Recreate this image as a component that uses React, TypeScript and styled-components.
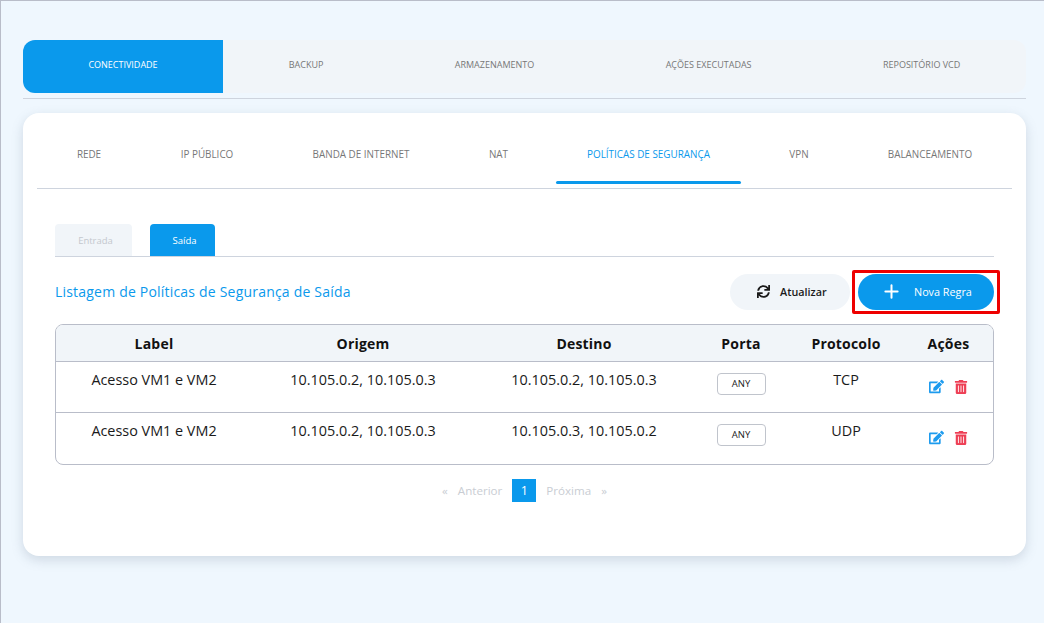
import React from "react";
import styled, { createGlobalStyle } from "styled-components";
import { FaEdit, FaSync, FaTrashAlt } from "react-icons/fa";
import { Plus } from "lucide-react";

const blue = "#0a99ec";
const soft = "#f1f5f9";
const line = "#ced4de";

const GlobalStyle = createGlobalStyle`
  html, body { margin: 0; padding: 0; height: 100%; }
  body {
    font-family: "Open Sans", "Liberation Sans", sans-serif;
    background: #eff7fe;
    overflow: hidden;
  }
`;

const Page = styled.div`
  box-sizing: border-box;
  height: 623px;
  padding: 39px 18px 0 22px;
  border-top: 1px solid #b9bdc9;
  border-left: 1px solid #b9bdc9;
`;

const MainTabs = styled.nav`
  display: flex;
  height: 53px;
  background: ${soft};
  border-radius: 12px;
`;

const MainTab = styled.div<{ $active?: boolean }>`
  flex: ${(p) => (p.$active ? "0 0 200px" : "1 1 auto")};
  box-sizing: border-box;
  display: flex;
  align-items: center;
  justify-content: center;
  padding: 0 ${(p) => (p.$active ? 0 : 65)}px 4px;
  font-size: 9px;
  white-space: nowrap;
  color: ${(p) => (p.$active ? "#fff" : "#777")};
  background: ${(p) => (p.$active ? blue : "transparent")};
  border-radius: ${(p) => (p.$active ? "12px 0 0 12px" : "0")};
`;

const MainRule = styled.div`
  height: 1px;
  margin-top: 5px;
  background: ${line};
`;

const Card = styled.section`
  box-sizing: border-box;
  height: 443px;
  margin-top: 14px;
  padding: 0 14px;
  background: #fff;
  border-radius: 16px;
  box-shadow: 0 4px 12px rgba(90, 110, 130, 0.22);
`;

const SubTabs = styled.nav`
  display: flex;
  height: 75px;
  border-bottom: 1px solid ${line};
`;

const SubTab = styled.div<{ $width: number; $inset?: number; $active?: boolean }>`
  position: relative;
  flex: 0 0 ${(p) => p.$width}px;
  box-sizing: border-box;
  display: flex;
  align-items: center;
  justify-content: center;
  padding-top: 6px;
  padding-right: ${(p) => p.$inset ?? 0}px;
  font-size: 9.9px;
  white-space: nowrap;
  color: ${(p) => (p.$active ? blue : "#777")};
  ${(p) =>
    p.$active &&
    `&::after {
      content: "";
      position: absolute;
      left: 0;
      right: 0;
      bottom: 4px;
      height: 3px;
      border-radius: 2px;
      background: ${blue};
    }`}
`;

const Body = styled.div`
  padding: 35px 18px 0;
`;

const Toggle = styled.div`
  display: flex;
  gap: 18px;
  height: 32px;
  border-bottom: 1px solid ${line};
`;

const ToggleTab = styled.div<{ $width: number; $active?: boolean }>`
  box-sizing: border-box;
  display: flex;
  align-items: center;
  justify-content: center;
  width: ${(p) => p.$width}px;
  padding-left: 4px;
  font-size: 9.5px;
  font-weight: 500;
  color: ${(p) => (p.$active ? "#fff" : "#c4c8ce")};
  background: ${(p) => (p.$active ? blue : soft)};
  border-radius: 4px 4px 0 0;
`;

const Header = styled.div`
  display: flex;
  align-items: center;
  justify-content: space-between;
  margin-top: 17px;
  height: 36px;
`;

const Title = styled.h2`
  margin: 0;
  padding-bottom: 2px;
  font-size: 14px;
  font-weight: 400;
  letter-spacing: 0.2px;
  color: ${blue};
`;

const Actions = styled.div`
  display: flex;
  gap: 8px;
`;

const Pill = styled.button<{ $primary?: boolean }>`
  display: flex;
  align-items: center;
  height: 36px;
  border: 0;
  border-radius: 18px;
  padding: 0 0 2px;
  font-family: inherit;
  font-size: 10.8px;
  font-weight: ${(p) => (p.$primary ? 400 : 600)};
  color: ${(p) => (p.$primary ? "#fff" : "#1a1a1a")};
  background: ${(p) => (p.$primary ? blue : soft)};
  width: ${(p) => (p.$primary ? 136 : 120)}px;
  padding-left: ${(p) => (p.$primary ? 23 : 27)}px;
  gap: ${(p) => (p.$primary ? 12 : 10)}px;
`;

const Highlight = styled.div`
  position: relative;
  &::after {
    content: "";
    position: absolute;
    inset: -4px -6px;
    border: 3px solid #ee0000;
    border-radius: 2px;
    pointer-events: none;
  }
`;

const TableBox = styled.div`
  margin-top: 14px;
  border: 1px solid #b9bdc9;
  border-radius: 8px;
  overflow: hidden;
`;

const Table = styled.table`
  width: 100%;
  table-layout: fixed;
  border-collapse: separate;
  border-spacing: 0;

  tbody tr + tr td {
    border-top: 1px solid #b9bdc9;
  }
`;

const Th = styled.th`
  height: 36px;
  padding: 0;
  font-size: 14px;
  font-weight: 700;
  letter-spacing: 0.2px;
  color: #111;
  background: ${soft};
  border-bottom: 1px solid #b9bdc9;
`;

const Tr = styled.tr<{ $height: number }>`
  height: ${(p) => p.$height}px;
`;

const Td = styled.td`
  padding: 8px 0 0;
  vertical-align: top;
  text-align: center;
  font-size: 14.4px;
  line-height: 20px;
  color: #1a1a1a;
`;

const Badge = styled.span`
  display: inline-flex;
  align-items: center;
  justify-content: center;
  box-sizing: border-box;
  width: 49px;
  height: 22px;
  margin-top: 3px;
  border: 1px solid #c0c4cc;
  border-radius: 4px;
  font-size: 9.5px;
  color: #222;
`;

const IconRow = styled.div`
  display: flex;
  justify-content: center;
  align-items: center;
  gap: 10px;
  margin-top: 9px;
  font-size: 14px;
`;

const EditIcon = styled(FaEdit)`
  font-size: 15px;
  color: #1d9bee;
`;

const TrashIcon = styled(FaTrashAlt)`
  font-size: 14px;
  color: #ee3f55;
`;

const Pager = styled.div`
  display: flex;
  justify-content: center;
  align-items: center;
  gap: 10px;
  margin-top: 14px;
  height: 23px;
  font-size: 11.6px;
  color: #c9cdd3;
`;

const PagerCurrent = styled.span`
  display: flex;
  align-items: center;
  justify-content: center;
  width: 24px;
  height: 23px;
  font-size: 12.5px;
  color: #fff;
  background: ${blue};
`;

const mainTabs = ["CONECTIVIDADE", "BACKUP", "ARMAZENAMENTO", "AÇÕES EXECUTADAS", "REPOSITÓRIO VCD"];

const subTabs = [
  { label: "REDE", width: 104 },
  { label: "IP PÚBLICO", width: 132 },
  { label: "BANDA DE INTERNET", width: 176 },
  { label: "NAT", width: 107, inset: 8 },
  { label: "POLÍTICAS DE SEGURANÇA", width: 185, active: true },
  { label: "VPN", width: 116 },
  { label: "BALANCEAMENTO", width: 155, inset: 9 },
];

const columns = [
  { label: "Label", width: 196 },
  { label: "Origem", width: 222 },
  { label: "Destino", width: 220 },
  { label: "Porta", width: 94 },
  { label: "Protocolo", width: 116 },
  { label: "Ações", width: 89 },
];

const rules = [
  { label: "Acesso VM1 e VM2", origin: "10.105.0.2, 10.105.0.3", target: "10.105.0.2, 10.105.0.3", protocol: "TCP", height: 50 },
  { label: "Acesso VM1 e VM2", origin: "10.105.0.2, 10.105.0.3", target: "10.105.0.3, 10.105.0.2", protocol: "UDP", height: 52 },
];

export default function App() {
  return (
    <Page>
      <GlobalStyle />
      <MainTabs>
        {mainTabs.map((tab, i) => (
          <MainTab key={tab} $active={i === 0}>{tab}</MainTab>
        ))}
      </MainTabs>
      <MainRule />
      <Card>
        <SubTabs>
          {subTabs.map((tab) => (
            <SubTab key={tab.label} $width={tab.width} $inset={tab.inset} $active={tab.active}>{tab.label}</SubTab>
          ))}
        </SubTabs>
        <Body>
          <Toggle>
            <ToggleTab $width={77}>Entrada</ToggleTab>
            <ToggleTab $width={65} $active>Saída</ToggleTab>
          </Toggle>
          <Header>
            <Title>Listagem de Políticas de Segurança de Saída</Title>
            <Actions>
              <Pill><FaSync size={13} /> Atualizar</Pill>
              <Highlight>
                <Pill $primary><Plus size={21} strokeWidth={2.3} /> Nova Regra</Pill>
              </Highlight>
            </Actions>
          </Header>
          <TableBox>
            <Table>
              <colgroup>
                {columns.map((col) => (
                  <col key={col.label} width={col.width} />
                ))}
              </colgroup>
              <thead>
                <tr>
                  {columns.map((col) => (
                    <Th key={col.label}>{col.label}</Th>
                  ))}
                </tr>
              </thead>
              <tbody>
                {rules.map((rule) => (
                  <Tr key={rule.target} $height={rule.height}>
                    <Td>{rule.label}</Td>
                    <Td>{rule.origin}</Td>
                    <Td>{rule.target}</Td>
                    <Td><Badge>ANY</Badge></Td>
                    <Td>{rule.protocol}</Td>
                    <Td>
                      <IconRow>
                        <EditIcon />
                        <TrashIcon />
                      </IconRow>
                    </Td>
                  </Tr>
                ))}
              </tbody>
            </Table>
          </TableBox>
          <Pager>
            <span>«</span>
            <span>Anterior</span>
            <PagerCurrent>1</PagerCurrent>
            <span>Próxima</span>
            <span>»</span>
          </Pager>
        </Body>
      </Card>
    </Page>
  );
}
